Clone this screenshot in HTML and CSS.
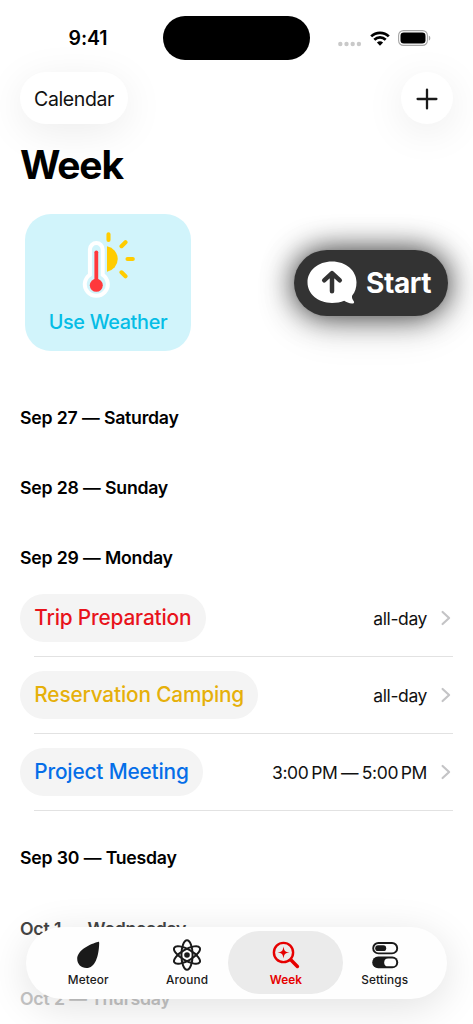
FILE: index.html
```html
<!DOCTYPE html>
<html lang="en">
<head>
<meta charset="utf-8">
<title>Week</title>
<link rel="stylesheet" href="styles.css">
</head>
<body>
<div class="screen">
  <header class="status">
    <span class="time">9:41</span>
    <span class="island"></span>
    <span class="indicators">
      <svg class="dots" width="24" height="6" viewBox="0 0 24 6" fill="#c9c9c9"><circle cx="2.3" cy="3" r="2.2"/><circle cx="8.5" cy="3" r="2.2"/><circle cx="14.7" cy="3" r="2.2"/><circle cx="20.9" cy="3" r="2.2"/></svg>
      <svg class="wifi" width="20" height="15" viewBox="0 0 20 15"><g fill="none" stroke="#000" stroke-width="2.7"><path d="M1.2 5.4a12.5 12.5 0 0 1 17.6 0"/><path d="M4.3 8.7a8.2 8.2 0 0 1 11.4 0"/></g><path d="M10 14.7l-3.1-3.1a4.5 4.5 0 0 1 6.2 0z"/></svg>
      <svg class="battery" width="33" height="16" viewBox="0 0 33 16"><rect x=".6" y=".6" width="28.8" height="14.8" rx="4.8" fill="none" stroke="#a5a5a5" stroke-width="1.1"/><rect x="2.5" y="2.5" width="25" height="11" rx="3.3"/><path d="M30.8 5.4c2 .7 2 4.5 0 5.2z" fill="#a5a5a5"/></svg>
    </span>
  </header>
  <nav class="toolbar">
    <button class="glass calendar">Calendar</button>
    <button class="glass add" aria-label="Add"><svg width="22" height="22" viewBox="0 0 22 22" fill="none" stroke="#1a1a1a" stroke-width="2.3" stroke-linecap="round"><path d="M11 1.6v18.8M1.6 11h18.8"/></svg></button>
  </nav>
  <h1 class="title">Week</h1>
  <section class="actions">
    <button class="weather">
      <svg width="54" height="70" viewBox="-1 0 54 70">
        <path d="M25 16.2a13 13 0 0 1 0 25.6z" fill="#ffcc00"/>
        <g stroke="#ffcc00" stroke-width="4.1" stroke-linecap="round"><path d="M26.5 4.2v5.7M39.5 16.2l4-4M45.5 29h5.300M39.5 42.3l4 4"/></g>
        <path d="M7.9 19.5a6.4 6.4 0 0 1 12.800 0v25.300a11.500 11.500 0 1 1-12.800 0z" fill="#d1f4fb" stroke="#fff" stroke-width="4"/>
        <path d="M14.300 22.300v33" stroke="#ff383c" stroke-width="3.800" stroke-linecap="round"/><circle cx="14.300" cy="55.300" r="6.500" fill="#ff383c"/>
      </svg>
      <span>Use Weather</span>
    </button>
    <button class="start">
      <svg width="50" height="43" viewBox="0 0 50 43"><path d="M25 .5C11 .5.5 9.7.5 21.3S11 42 25 42c4.400 0 8.800-.7 12.200-2.200 2.400 1.400 5.300 2.900 8.600 2.600 1.500-.1 1.700-1.500.8-2.500-1.400-1.600-2-3.700-1.400-5.300C48.300 31 49.500 26.300 49.500 21.300 49.500 9.700 39 .5 25 .5z" fill="#fff"/><path d="M25 30.300V12.500M17.200 19.300L25 12.100l7.800 7.200" fill="none" stroke="#333" stroke-width="4.500" stroke-linecap="round" stroke-linejoin="round"/></svg>
      <span>Start</span>
    </button>
  </section>
  <main class="agenda">
    <h2 class="day sat">Sep 27 — Saturday</h2>
    <h2 class="day sun">Sep 28 — Sunday</h2>
    <section class="group">
      <h2 class="day mon">Sep 29 — Monday</h2>
      <div class="event"><span class="pill red">Trip Preparation</span><span class="when">all-day</span><svg class="chev" width="10" height="16" viewBox="0 0 10 16"><path d="M1.600 2l6.500 6-6.500 6"/></svg></div>
      <div class="event"><span class="pill yellow">Reservation Camping</span><span class="when">all-day</span><svg class="chev" width="10" height="16" viewBox="0 0 10 16"><path d="M1.600 2l6.500 6-6.500 6"/></svg></div>
      <div class="event"><span class="pill blue">Project Meeting</span><span class="when range">3:00&#8239;PM — 5:00&#8239;PM</span><svg class="chev" width="10" height="16" viewBox="0 0 10 16"><path d="M1.600 2l6.500 6-6.500 6"/></svg></div>
    </section>
    <h2 class="day tue">Sep 30 — Tuesday</h2>
    <h2 class="day dim">Oct 1 — Wednesday</h2>
    <h2 class="day faint">Oct 2 — Thursday</h2>
  </main>
  <nav class="tabs">
    <a class="tab"><svg width="32" height="32" viewBox="0 0 32 32"><path d="M26 2.900C19 4.600 5.200 10.800 5.200 19.800 5.200 25.200 9.200 29 14.500 29 23 29 26.800 17.500 27.200 4.200c0-1-.4-1.500-1.200-1.300z" fill="#1a1a1a"/></svg><span>Meteor</span></a>
    <a class="tab"><svg width="32" height="32" viewBox="0 0 32 32" fill="none" stroke="#1a1a1a" stroke-width="2"><ellipse cx="16" cy="16" rx="5.600" ry="14.700"/><ellipse cx="16" cy="16" rx="5.600" ry="14.700" transform="rotate(60 16 16)"/><ellipse cx="16" cy="16" rx="5.600" ry="14.700" transform="rotate(-60 16 16)"/><circle cx="16" cy="16" r="2.800" fill="#1a1a1a" stroke="none"/></svg><span>Around</span></a>
    <a class="tab active"><svg width="32" height="32" viewBox="0 0 32 32"><circle cx="13.500" cy="13.500" r="9.600" fill="none" stroke="#e60000" stroke-width="2.400"/><path d="M21 21l6.400 6.400" stroke="#e60000" stroke-width="3.500" stroke-linecap="round"/><path d="M13.500 7.500c.7 4.500 1.500 5.300 6 6-4.500.7-5.300 1.500-6 6-.7-4.500-1.500-5.300-6-6 4.500-.7 5.300-1.500 6-6z" fill="#e60000"/></svg><span>Week</span></a>
    <a class="tab"><svg width="32" height="32" viewBox="0 0 32 32" fill="#1a1a1a"><rect x="4.200" y="4" width="24" height="10.400" rx="5.200" fill="none" stroke="#1a1a1a" stroke-width="1.900"/><rect x="6.200" y="6.300" width="11" height="5.800" rx="2.900"/><rect x="3.200" y="17.500" width="26" height="11.800" rx="5.900"/><rect x="15.200" y="19.500" width="12" height="7.800" rx="3.900" fill="#fff"/></svg><span>Settings</span></a>
  </nav>
</div>
</body>
</html>
```
FILE: styles.css
```css
* { box-sizing: border-box; }
body { margin: 0; background: #fff; font-family: Inter, "Liberation Sans", sans-serif; color: #000; }
button { border: 0; padding: 0; font: inherit; color: inherit; }
svg { display: block; flex: none; }
h1, h2 { margin: 0; white-space: nowrap; }
.screen { position: relative; width: 473px; height: 1024px; overflow: hidden; }

.status { height: 72.400px; padding: 16px 0 0 20px; display: grid; grid-template-columns: 143px 147px 1fr; align-items: start; }
.time { width: 136px; height: 44px; line-height: 45px; text-align: center; font-size: 19.500px; font-weight: 600; letter-spacing: -.1px; }
.island { height: 43.500px; border-radius: 22px; background: #000; }
.indicators { height: 44px; padding-left: 28px; display: flex; align-items: center; }
.dots { margin-top: 11px; }
.wifi { margin-left: 8px; }
.battery { margin-left: 8px; }

.toolbar { padding: 0 20px; height: 52px; display: flex; justify-content: space-between; }
.glass { height: 52px; border-radius: 26px; background: #fff; box-shadow: 0 8px 42px rgba(0,0,0,.08); display: flex; align-items: center; justify-content: center; }
.calendar { width: 108px; padding-top: 1px; font-size: 19.500px; letter-spacing: -.4px; color: #111; }
.add { width: 52px; padding-top: 1px; }

.title { padding-left: 20px; margin-top: 14.600px; height: 51px; line-height: 51px; font-size: 39px; font-weight: 700; letter-spacing: -1.200px; }
.actions { margin-top: 24.400px; height: 137px; padding: 0 25px; display: flex; justify-content: space-between; align-items: center; }
.weather { width: 166px; height: 137px; border-radius: 26px; background: #d1f4fb; display: flex; flex-direction: column; align-items: center; padding-top: 15.500px; color: #05bde6; font-size: 19.800px; font-weight: 550; letter-spacing: -.3px; white-space: nowrap; }
.weather span { margin-top: 9px; line-height: 26px; }
.start { width: 154px; height: 66px; border-radius: 33px; background: #333; box-shadow: 0 0 0 1px rgba(150,150,150,.25), 0 0 30px rgba(0,0,0,.8), 0 8px 46px rgba(0,0,0,.14); color: #fff; display: flex; align-items: center; padding-left: 13px; gap: 9px; font-size: 28px; font-weight: 650; letter-spacing: -.4px; }
.start span { padding-top: 1px; }

.agenda { margin-top: 55.200px; padding-left: 20px; display: flex; flex-direction: column; gap: 48.300px; }
.day { height: 22px; line-height: 22px; font-size: 17.700px; font-weight: 600; letter-spacing: -.25px; word-spacing: .3px; }
.group { margin-bottom: -11.500px; }
.group .day { margin-bottom: 10.500px; }
.dim { color: #444; }
.faint { color: #c4c4c4; }
.event { position: relative; height: 77px; padding-right: 22px; display: flex; align-items: center; }
.event::after { content: ""; position: absolute; left: 14px; right: 20px; bottom: 0; height: 1px; background: #e2e2e2; }
.pill { height: 48px; line-height: 48px; padding: 0 14.300px; border-radius: 24px; background: #f4f4f4; font-size: 20.800px; font-weight: 550; letter-spacing: -.16px; white-space: nowrap; }
.red { color: #e8131b; }
.yellow { color: #e6b00a; }
.blue { color: #056ee8; }
.when { margin-left: auto; font-size: 17.500px; letter-spacing: -.4px; color: #111; white-space: nowrap; }
.range { word-spacing: -.8px; }
.chev { margin-left: 14px; fill: none; stroke: #c4c4c6; stroke-width: 2.200; stroke-linecap: round; stroke-linejoin: round; }

.tabs { position: absolute; left: 26px; top: 927px; width: 421px; height: 72px; padding: 4px; border-radius: 36px; background: #fefefe; box-shadow: 0 8px 42px rgba(0,0,0,.12); display: flex; justify-content: center; }
.tab { width: 115px; margin: 0 -8.100px; height: 63px; border-radius: 31.500px; display: flex; flex-direction: column; align-items: center; padding-top: 8px; font-size: 11.800px; font-weight: 500; letter-spacing: .15px; color: #1a1a1a; }
.tab span { line-height: 15px; margin-top: 2px; }
.active { background: #ebebeb; color: #e60000; font-weight: 600; letter-spacing: 0; }
```
